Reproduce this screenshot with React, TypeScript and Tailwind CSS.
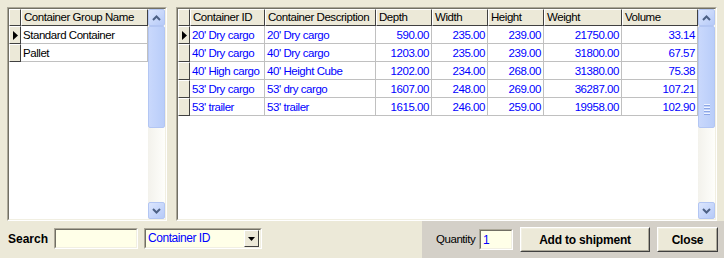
import React from "react";

type Col = { label: string; w: number; right?: boolean };

const rightCols: Col[] = [
  { label: "Container ID", w: 75 },
  { label: "Container Description", w: 111 },
  { label: "Depth", w: 56, right: true },
  { label: "Width", w: 56, right: true },
  { label: "Height", w: 56, right: true },
  { label: "Weight", w: 78, right: true },
  { label: "Volume", w: 76, right: true },
];

const rightRows = [
  ["20' Dry cargo", "20' Dry cargo", "590.00", "235.00", "239.00", "21750.00", "33.14"],
  ["40' Dry cargo", "40' Dry cargo", "1203.00", "235.00", "239.00", "31800.00", "67.57"],
  ["40' High cargo", "40' Height Cube", "1202.00", "234.00", "268.00", "31380.00", "75.38"],
  ["53' Dry cargo", "53' dry cargo", "1607.00", "248.00", "269.00", "36287.00", "107.21"],
  ["53' trailer", "53' trailer", "1615.00", "246.00", "259.00", "19958.00", "102.90"],
];

const leftCols: Col[] = [{ label: "Container Group Name", w: 127 }];
const leftRows = [["Standard Container"], ["Pallet"]];

function Chevron({ up }: { up?: boolean }) {
  return (
    <svg width="9" height="6" viewBox="0 0 9 6">
      <path
        d={up ? "M1 5 L4.5 1.5 L8 5" : "M1 1 L4.5 4.5 L8 1"}
        fill="none"
        stroke="#4d6185"
        strokeWidth="2"
      />
    </svg>
  );
}

function ScrollBtn({ up }: { up?: boolean }) {
  return (
    <div className="h-[17px] w-[17px] flex items-center justify-center rounded-[2px] border border-[#b3c6f3] bg-gradient-to-br from-[#dce6fd] to-[#b6caf8]">
      <Chevron up={up} />
    </div>
  );
}

function ScrollBar({ grip }: { grip?: boolean }) {
  return (
    <div className="w-[17px] flex flex-col bg-gradient-to-r from-[#f3f2ec] to-[#fefefb]">
      <ScrollBtn up />
      <div className="flex-1 flex flex-col">
        <div className="h-[102px] w-[17px] rounded-[2px] border border-[#b3c6f3] bg-gradient-to-r from-[#c9d8fc] to-[#b9cdf9] flex flex-col items-center justify-end pb-[12px]">
          {grip && (
            <div className="flex flex-col gap-[1px]">
              {[0, 1, 2, 3].map((i) => (
                <div key={i} className="w-[6px] h-[1px] bg-[#eef3fe] border-b border-[#8ca6e6] box-content" />
              ))}
            </div>
          )}
        </div>
      </div>
      <ScrollBtn />
    </div>
  );
}

function Grid({ cols, rows, grip }: { cols: Col[]; rows: string[][]; grip?: boolean }) {
  return (
    <div className="h-full border border-[#aca899] border-r-white border-b-white">
      <div className="h-full border border-[#716f64] border-r-[#f1efe2] border-b-[#f1efe2] flex bg-white">
        <div className="flex-1 flex flex-col">
          <div className="flex h-[17px] bg-[#ece9d8]">
            <div className="w-[12px] h-[17px] border-r border-b border-[#404040] border-l-white border-t-white border-l border-t box-border" />
            {cols.map((c) => (
              <div
                key={c.label}
                style={{ width: c.w }}
                className="h-[17px] border-l border-t border-white border-r border-b border-r-[#404040] border-b-[#404040] box-border px-[2px] leading-[15px] whitespace-nowrap overflow-hidden text-black"
              >
                {c.label}
              </div>
            ))}
          </div>
          {rows.map((r, ri) => (
            <div key={ri} className="flex h-[18px]">
              <div className="w-[12px] h-[18px] bg-[#ece9d8] border-l border-t border-white border-r border-b border-r-[#404040] border-b-[#404040] box-border flex items-center justify-center">
                {ri === 0 && (
                  <svg width="5" height="9" viewBox="0 0 5 9">
                    <path d="M0 0 L5 4.5 L0 9 Z" fill="#000" />
                  </svg>
                )}
              </div>
              {r.map((v, ci) => (
                <div
                  key={ci}
                  style={{ width: cols[ci].w }}
                  className={
                    "h-[18px] border-r border-b border-[#c0c0c0] box-border px-[2px] leading-[18px] whitespace-nowrap overflow-hidden " +
                    (cols === leftCols ? "text-black " : "text-[#0000ff] ") +
                    (cols[ci].right ? "text-right" : "text-left")
                  }
                >
                  {v}
                </div>
              ))}
            </div>
          ))}
        </div>
        <ScrollBar grip={grip} />
      </div>
    </div>
  );
}

function Sunken({ className, children }: { className: string; children?: React.ReactNode }) {
  return (
    <div className={"border border-[#aca899] border-r-white border-b-white " + className}>
      <div className="h-full w-full border border-[#716f64] border-r-[#f1efe2] border-b-[#f1efe2] bg-[#ffffe8] flex items-center">
        {children}
      </div>
    </div>
  );
}

function Button({ label, w }: { label: string; w: number }) {
  return (
    <div
      style={{ width: w }}
      className="h-[25px] border border-white border-r-[#404040] border-b-[#404040]"
    >
      <div className="h-full w-full border border-[#f1efe2] border-r-[#aca899] border-b-[#aca899] bg-[#ece9d8] flex items-center justify-center font-bold text-[12px] text-black tracking-[-0.2px]">
        {label}
      </div>
    </div>
  );
}

export default function App() {
  return (
    <div
      className="w-[724px] h-[258px] bg-[#ece9d8] overflow-hidden text-[11.5px] tracking-[-0.45px]"
      style={{ fontFamily: '"Liberation Sans", Arial, sans-serif' }}
    >
      <div className="flex h-[221px] pt-[7px] px-[7px] gap-[9px]">
        <div className="w-[160px] h-[214px]">
          <Grid cols={leftCols} rows={leftRows} />
        </div>
        <div className="w-[541px] h-[214px]">
          <Grid cols={rightCols} rows={rightRows} grip />
        </div>
      </div>
      <div className="flex h-[37px]">
        <div className="flex-1 flex items-center pl-[8px] pb-[2px]">
          <span className="font-bold text-[12px] text-black w-[46px] tracking-[0px]">Search</span>
          <Sunken className="w-[84px] h-[21px]" />
          <Sunken className="w-[118px] h-[21px] ml-[6px]">
            <span className="flex-1 pl-[2px] text-[#0000ff] text-[12px] leading-[17px]">Container ID</span>
            <div className="w-[15px] h-[17px] mr-[1px] bg-[#ece9d8] border border-white border-r-[#404040] border-b-[#404040] flex items-center justify-center">
              <svg width="7" height="4" viewBox="0 0 7 4">
                <path d="M0 0 L7 0 L3.5 4 Z" fill="#000" />
              </svg>
            </div>
          </Sunken>
        </div>
        <div className="w-[302px] bg-[#d4d0c8] flex items-center pl-[14px]">
          <span className="text-[11.5px] text-black w-[43px]">Quantity</span>
          <Sunken className="w-[34px] h-[21px]">
            <span className="pl-[2px] text-[#0000ff] text-[12px]">1</span>
          </Sunken>
          <div className="ml-[7px]">
            <Button label="Add to shipment" w={130} />
          </div>
          <div className="ml-[7px]">
            <Button label="Close" w={61} />
          </div>
        </div>
      </div>
    </div>
  );
}
